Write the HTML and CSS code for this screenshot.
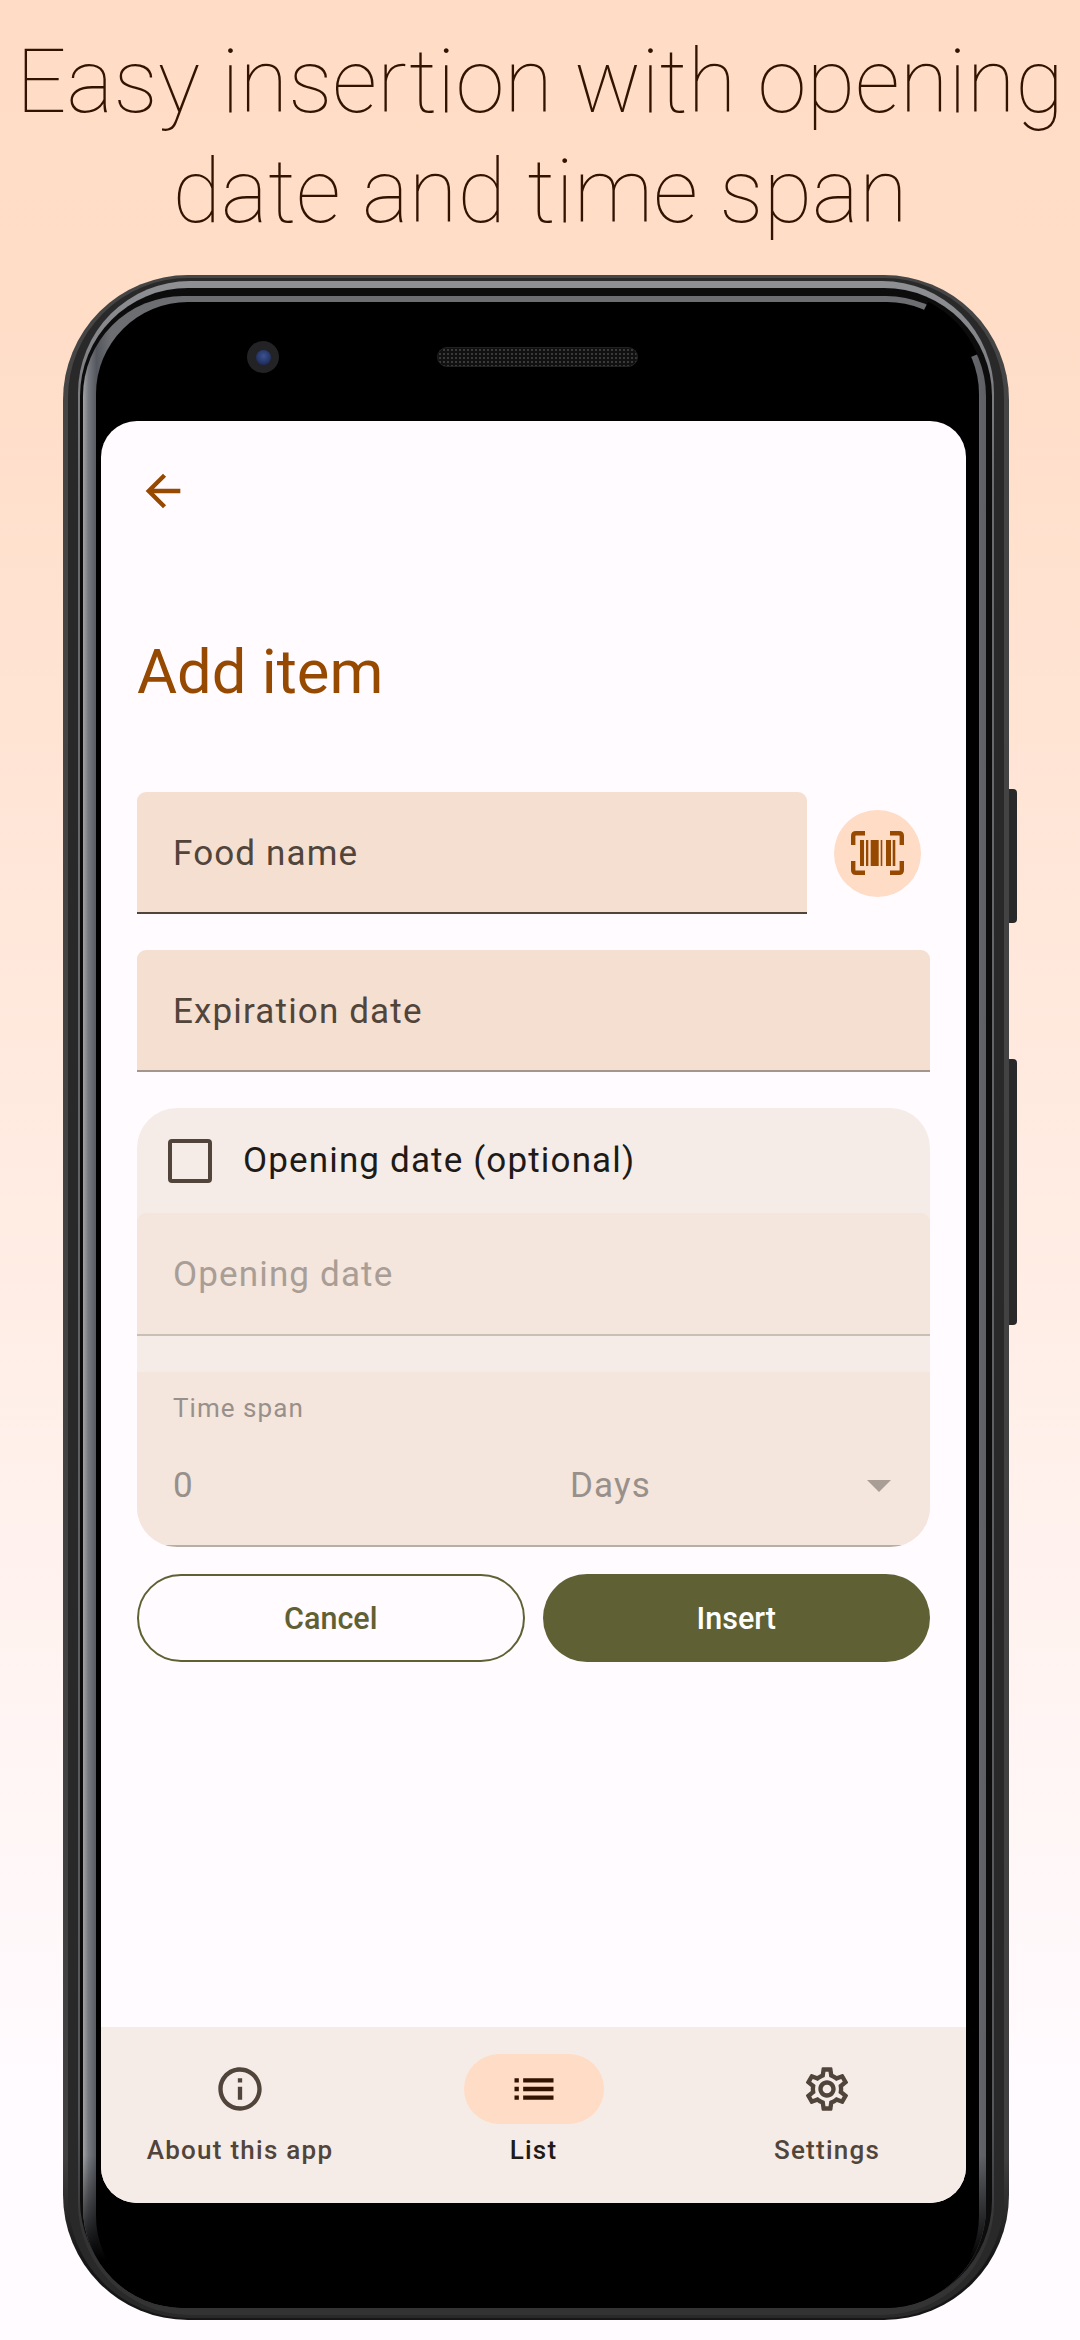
FILE: index.html
```html
<!DOCTYPE html>
<html lang="en">
<head>
  <meta charset="UTF-8">
  <title>Add item</title>
  <link rel="stylesheet" href="styles.css">
</head>
<body>

  <h1 class="headline">Easy insertion with opening<br>date and time span</h1>

  <div class="phone">
    <!-- body of the phone, drawn behind the screen -->
    <svg class="phone-frame" width="946" height="2045" viewBox="0 0 946 2045">
      <defs>
        <linearGradient id="shell" x1="0" y1="0" x2="0" y2="1">
          <stop offset="0" stop-color="#454546"/>
          <stop offset="0.92" stop-color="#404041"/>
          <stop offset="0.97" stop-color="#161616"/>
        </linearGradient>
        <linearGradient id="rim" x1="0" y1="0" x2="0" y2="1">
          <stop offset="0" stop-color="#8e9094"/>
          <stop offset="0.1" stop-color="#6a6c70"/>
          <stop offset="0.9" stop-color="#55575a"/>
          <stop offset="0.96" stop-color="#333334"/>
        </linearGradient>
        <linearGradient id="band" gradientUnits="userSpaceOnUse" x1="20" y1="0" x2="923" y2="0">
          <stop offset="0" stop-color="#a2a3a4"/>
          <stop offset="0.006" stop-color="#767980"/>
          <stop offset="0.015" stop-color="#54575d"/>
          <stop offset="0.03" stop-color="#6c6e72"/>
          <stop offset="0.97" stop-color="#6c6e72"/>
          <stop offset="1" stop-color="#5e6065"/>
        </linearGradient>
        <linearGradient id="band-fade" gradientUnits="userSpaceOnUse" x1="0" y1="1880" x2="0" y2="1985">
          <stop offset="0" stop-color="#000" stop-opacity="0"/>
          <stop offset="1" stop-color="#000"/>
        </linearGradient>
      </defs>
      <rect width="946" height="2045" rx="125" fill="url(#shell)"/>
      <rect x="5" y="3" width="936" height="2040" rx="120" fill="#29292a"/>
      <rect x="15" y="6" width="916" height="2034" rx="112" fill="url(#rim)"/>
      <rect x="17" y="13" width="912" height="2020" rx="108" fill="#0c0c0d"/>
      <rect x="20" y="21" width="903" height="2012" rx="100" fill="url(#band)"/>
      <rect x="20" y="21" width="903" height="2012" rx="100" fill="url(#band-fade)"/>
      <rect x="33" y="27" width="883" height="2006" rx="92" fill="#000"/>
      <path d="M862 33 A100 100 0 0 1 908 82" fill="none" stroke="#000" stroke-width="14"/>
    </svg>

    <div class="side-key side-key-power"></div>
    <div class="side-key side-key-volume"></div>

    <div class="bezel">
      <div class="camera"><div class="lens"></div></div>
      <div class="speaker"></div>
    </div>

    <div class="screen">
      <div class="topbar">
        <svg class="icon" viewBox="0 0 24 24"><path fill="#964900" d="M20 11H7.83l5.59-5.59L12 4l-8 8 8 8 1.41-1.41L7.83 13H20v-2z"/></svg>
      </div>

      <h2 class="title">Add item</h2>

      <div class="name-row">
        <div class="field field-name">Food name</div>
        <div class="scan-btn">
          <svg width="53" height="44" viewBox="0 0 53 44">
            <path d="M14 2.2H5Q2.2 2.2 2.2 5V14M39 2.2H48Q50.8 2.2 50.8 5V14M14 41.8H5Q2.2 41.8 2.2 39V30M39 41.8H48Q50.8 41.8 50.8 39V30" fill="none" stroke="#964900" stroke-width="4.4"/>
            <path fill="#964900" d="M9 9h4v26H9zM15 9h2.3v26H15zM19.7 9h8v26h-8zM29.7 9h1.6v26h-1.6zM35 9h5v26h-5zM41.7 9h2.6v26h-2.6z"/>
          </svg>
        </div>
      </div>

      <div class="field field-date">Expiration date</div>

      <div class="optional-card">
        <div class="check-row">
          <div class="checkbox"></div>
          <span>Opening date (optional)</span>
        </div>
        <div class="field field-off">Opening date</div>
        <div class="span-field">
          <div class="span-label">Time span</div>
          <div class="span-values">
            <span>0</span>
            <span>Days</span>
            <div class="caret"></div>
          </div>
        </div>
      </div>

      <div class="actions">
        <div class="btn btn-outline">Cancel</div>
        <div class="btn btn-fill">Insert</div>
      </div>

      <div class="navbar">
        <div class="nav-item">
          <div class="nav-pill">
            <svg class="icon" viewBox="0 0 24 24"><path fill="#51443a" d="M11 7h2v2h-2zm0 4h2v6h-2zm1-9C6.48 2 2 6.48 2 12s4.48 10 10 10 10-4.48 10-10S17.52 2 12 2zm0 18c-4.41 0-8-3.59-8-8s3.59-8 8-8 8 3.59 8 8-3.59 8-8 8z"/></svg>
          </div>
          <span>About this app</span>
        </div>
        <div class="nav-item nav-item-on">
          <div class="nav-pill">
            <svg class="icon" viewBox="0 0 24 24"><path fill="#311300" d="M3 13h2v-2H3v2zm0 4h2v-2H3v2zm0-8h2V7H3v2zm4 4h14v-2H7v2zm0 4h14v-2H7v2zM7 7v2h14V7H7z"/></svg>
          </div>
          <span>List</span>
        </div>
        <div class="nav-item">
          <div class="nav-pill">
            <svg class="icon" viewBox="0 0 24 24"><path fill="#51443a" d="M19.43 12.98c.04-.32.07-.64.07-.98 0-.34-.03-.66-.07-.98l2.11-1.65c.19-.15.24-.42.12-.64l-2-3.46c-.09-.16-.26-.25-.44-.25-.06 0-.12.01-.17.03l-2.49 1c-.52-.4-1.08-.73-1.69-.98l-.38-2.65C14.46 2.18 14.25 2 14 2h-4c-.25 0-.46.18-.49.42l-.38 2.65c-.61.25-1.17.59-1.69.98l-2.49-1c-.06-.02-.12-.03-.18-.03-.17 0-.34.09-.43.25l-2 3.46c-.13.22-.07.49.12.64l2.11 1.65c-.04.32-.07.65-.07.98 0 .33.03.66.07.98l-2.11 1.65c-.19.15-.24.42-.12.64l2 3.46c.09.16.26.25.44.25.06 0 .12-.01.17-.03l2.49-1c.52.4 1.08.73 1.69.98l.38 2.65c.03.24.24.42.49.42h4c.25 0 .46-.18.49-.42l.38-2.65c.61-.25 1.17-.59 1.69-.98l2.49 1c.06.02.12.03.18.03.17 0 .34-.09.43-.25l2-3.46c.12-.22.07-.49-.12-.64l-2.11-1.65zm-1.98-1.71c.04.31.05.52.05.73 0 .21-.02.43-.05.73l-.14 1.13.89.7 1.08.84-.7 1.21-1.27-.51-1.04-.42-.9.68c-.43.32-.84.56-1.25.73l-1.06.43-.16 1.13-.2 1.35h-1.4l-.19-1.35-.16-1.13-1.06-.43c-.43-.18-.83-.41-1.23-.71l-.91-.7-1.06.43-1.27.51-.7-1.21 1.08-.84.89-.7-.14-1.13c-.03-.31-.05-.54-.05-.74s.02-.43.05-.73l.14-1.13-.89-.7-1.08-.84.7-1.21 1.27.51 1.04.42.9-.68c.43-.32.84-.56 1.25-.73l1.06-.43.16-1.13.2-1.35h1.39l.19 1.35.16 1.13 1.06.43c.43.18.83.41 1.23.71l.91.7 1.06-.43 1.27-.51.7 1.21-1.07.85-.89.7.14 1.13zM12 8c-2.21 0-4 1.79-4 4s1.79 4 4 4 4-1.79 4-4-1.79-4-4-4zm0 6c-1.1 0-2-.9-2-2s.9-2 2-2 2 .9 2 2-.9 2-2 2z"/></svg>
          </div>
          <span>Settings</span>
        </div>
      </div>
    </div>
  </div>

</body>
</html>
```

FILE: styles.css
```css
* {
  box-sizing: border-box;
}

html, body {
  margin: 0;
  height: 2340px;
  overflow: hidden;
}

body {
  font-family: Roboto, "Liberation Sans", sans-serif;
  background: linear-gradient(180deg, #ffdcc5 0%, #ffddc7 13%, #fffbff 90%);
}

.headline {
  margin: 0;
  padding-top: 27px;
  font-size: 88.8px;
  line-height: 110px;
  font-weight: 150;
  color: #311300;
  text-align: center;
  white-space: nowrap;
}

/* phone */
.phone {
  position: relative;
  width: 946px;
  height: 2045px;
  margin: 28px 0 0 63px;
  padding-left: 38px;
}

.phone-frame {
  position: absolute;
  left: 0;
  top: 0;
}

.side-key {
  position: absolute;
  left: 946px;
  width: 8px;
  background: #29292a;
  border-radius: 0 4px 4px 0;
}

.side-key-power {
  top: 514px;
  height: 134px;
}

.side-key-volume {
  top: 784px;
  height: 266px;
}

.bezel {
  position: relative;
  display: flex;
  align-items: center;
  gap: 158px;
  height: 146px;
  padding: 18px 0 0 146px;
}

.camera {
  display: flex;
  align-items: center;
  justify-content: center;
  width: 32px;
  height: 32px;
  border-radius: 50%;
  background: #232325;
}

.lens {
  width: 15px;
  height: 15px;
  border-radius: 50%;
  background: radial-gradient(circle at 50% 40%, #3d5291, #141f47);
}

.speaker {
  width: 201px;
  height: 20px;
  border-radius: 10px;
  border: 1px solid #222;
  background-color: #111;
  background-image: radial-gradient(#3a3a3a 1px, transparent 1.2px);
  background-size: 4px 4px;
}

.screen {
  position: relative;
  display: flex;
  flex-direction: column;
  width: 865px;
  height: 1782px;
  padding: 0 36px;
  background: #fffbff;
  border-radius: 36px;
  overflow: hidden;
}

.icon {
  display: block;
  width: 52px;
  height: 52px;
}

/* form */
.topbar {
  padding-top: 44px;
}

.title {
  margin: 115px 0 0;
  font-size: 61.5px;
  line-height: 80px;
  font-weight: 400;
  color: #964900;
}

.name-row {
  display: flex;
  align-items: center;
  margin-top: 80px;
}

.field {
  display: flex;
  align-items: center;
  height: 122px;
  padding: 2px 0 0 36px;
  font-size: 35px;
  letter-spacing: 1.15px;
  color: #51443a;
  background: #f4dfd1;
  border-radius: 9px 9px 0 0;
}

.field-name {
  width: 670px;
  border-bottom: 2px solid #51443a;
}

.scan-btn {
  display: flex;
  align-items: center;
  justify-content: center;
  width: 87px;
  height: 87px;
  margin-left: 27px;
  background: #ffdcc5;
  border-radius: 50%;
}

.field-date {
  margin-top: 36px;
  border-bottom: 2px solid #a3978d;
}

.optional-card {
  margin-top: 36px;
  height: 439px;
  background: #f5ece8;
  border-radius: 40px;
  overflow: hidden;
}

.check-row {
  display: flex;
  align-items: center;
  height: 105px;
  padding-left: 31px;
  font-size: 35px;
  letter-spacing: 1.15px;
  color: #201a17;
}

.checkbox {
  width: 44px;
  height: 44px;
  margin-right: 31px;
  border: 4.4px solid #51443a;
  border-radius: 4px;
}

.field-off {
  height: 123px;
  color: #a89e96;
  background: #f4e5dd;
  border-bottom: 2px solid #cabfb7;
}

.span-field {
  height: 175px;
  margin-top: 36px;
  padding: 21px 36px 0;
  background: #f4e5dd;
  border-bottom: 2px solid #b9aea6;
}

.span-label {
  font-size: 26px;
  line-height: 30px;
  letter-spacing: 1.05px;
  color: #98908a;
}

.span-values {
  display: grid;
  grid-template-columns: 397px 1fr 24px;
  align-items: center;
  margin-top: 42px;
  font-size: 35px;
  letter-spacing: 1.15px;
  color: #98908a;
}

.caret {
  width: 0;
  height: 0;
  margin-left: -3px;
  border-left: 12px solid transparent;
  border-right: 12px solid transparent;
  border-top: 12px solid #a89e96;
}

.actions {
  display: grid;
  grid-template-columns: 1fr 1fr;
  gap: 18px;
  margin-top: 27px;
}

.btn {
  display: flex;
  align-items: center;
  justify-content: center;
  height: 88px;
  border-radius: 44px;
  font-size: 30.5px;
  font-weight: 500;
}

.btn-outline {
  color: #5f6135;
  border: 2px solid #5f6135;
}

.btn-fill {
  color: #fff;
  background: #5f6135;
}

/* bottom bar */
.navbar {
  display: flex;
  justify-content: center;
  gap: 16.5px;
  margin: auto -36px 0;
  height: 176px;
  padding-top: 27px;
  background: #f5ece8;
}

.nav-item {
  display: flex;
  flex-direction: column;
  align-items: center;
  width: 277px;
  font-size: 26px;
  line-height: 34px;
  font-weight: 480;
  letter-spacing: 1.25px;
  color: #51443a;
}

.nav-pill {
  display: flex;
  align-items: center;
  justify-content: center;
  width: 140px;
  height: 70px;
  margin-bottom: 9px;
  border-radius: 35px;
}

.nav-item-on {
  color: #201a17;
}

.nav-item-on .nav-pill {
  background: #ffdcc5;
}
```
